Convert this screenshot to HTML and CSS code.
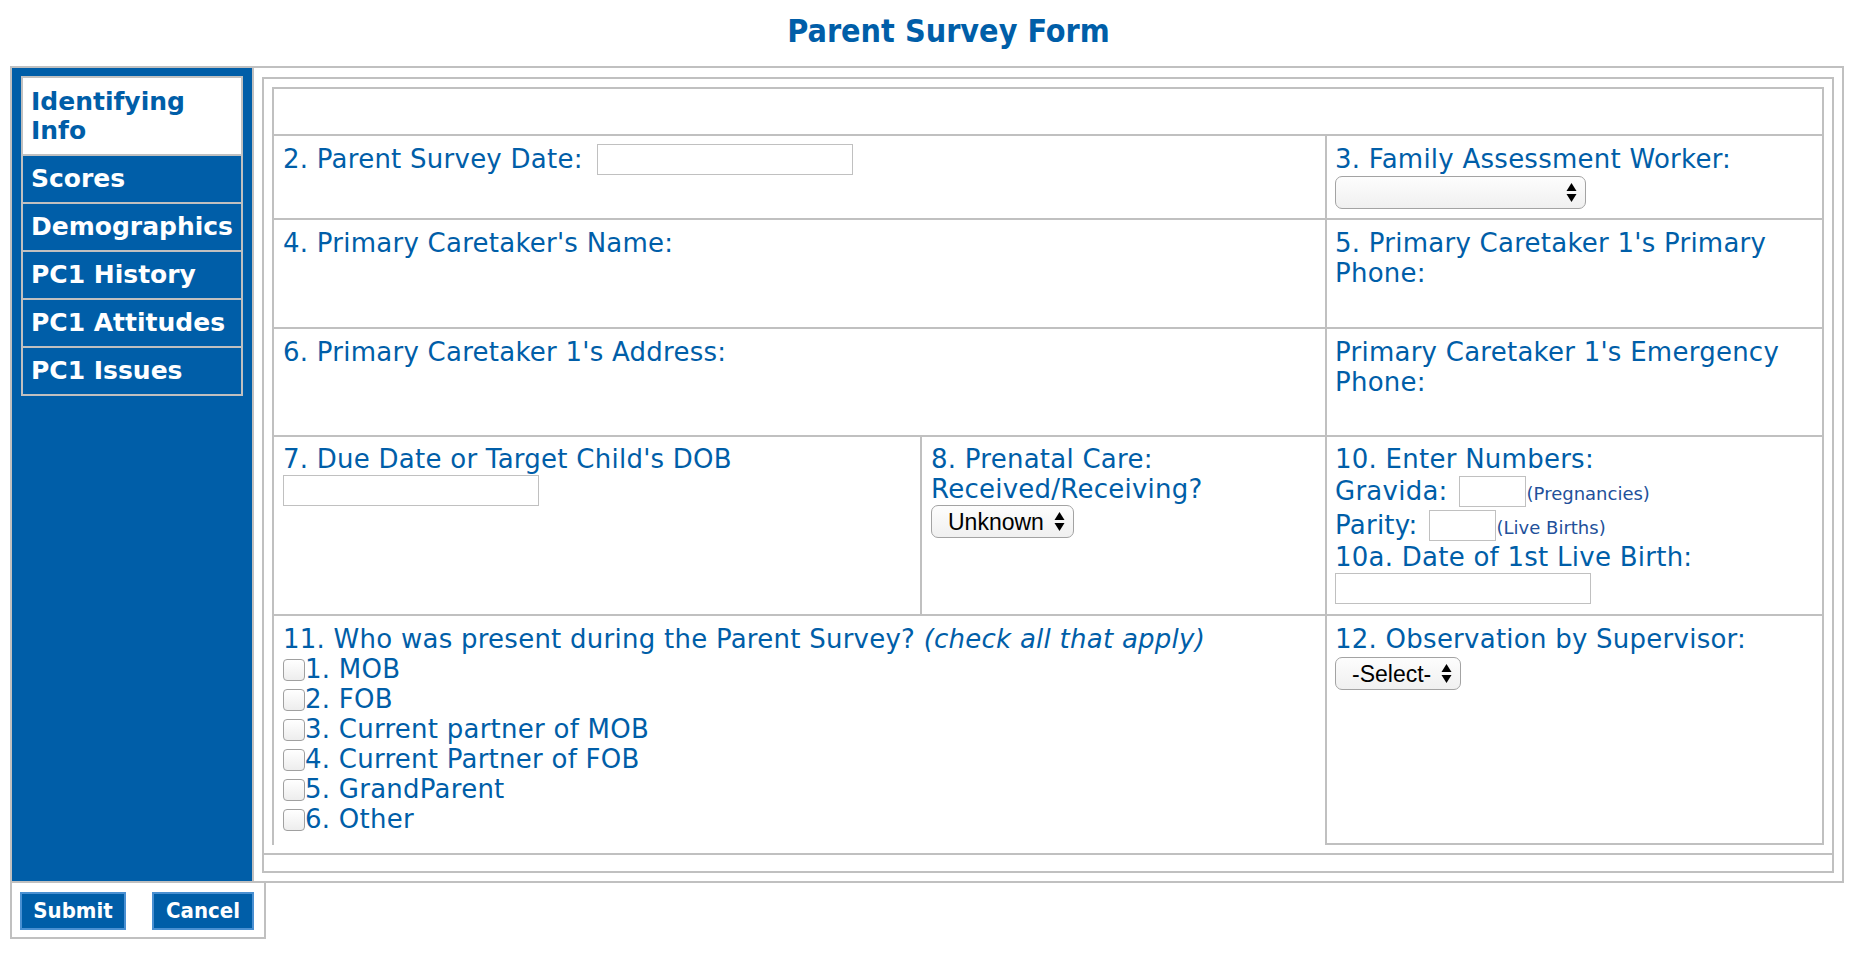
FILE: index.html
```html
<!DOCTYPE html>
<html>
<head>
<meta charset="utf-8">
<title>Parent Survey Form</title>
<link rel="stylesheet" href="styles.css">
</head>
<body>
<div class="page">
  <h1 class="title">Parent Survey Form</h1>
  <div class="frame">
    <nav class="side">
      <div class="tab active">Identifying Info</div>
      <div class="tab">Scores</div>
      <div class="tab">Demographics</div>
      <div class="tab">PC1 History</div>
      <div class="tab">PC1 Attitudes</div>
      <div class="tab">PC1 Issues</div>
    </nav>
    <main class="main">
      <div class="box">
        <div class="box-top">
          <div class="grid">
            <div class="c span3"></div>

            <div class="c span2">2. Parent Survey Date: <input class="txt date gap" type="text"></div>
            <div class="c rc">3. Family Assessment Worker:
              <span class="sel wk mt2"><svg class="arr" viewBox="0 0 11 21" width="11" height="21"><polygon points="0.5,9 5.5,1 10.5,9"/><polygon points="0.5,12 5.5,20 10.5,12"/></svg></span>
            </div>

            <div class="c span2">4. Primary Caretaker's Name:</div>
            <div class="c rc">5. Primary Caretaker 1's Primary Phone:</div>

            <div class="c span2">6. Primary Caretaker 1's Address:</div>
            <div class="c rc">Primary Caretaker 1's Emergency Phone:</div>

            <div class="c r5">7. Due Date or Target Child's DOB
              <input class="txt date blk mt1" type="text">
            </div>
            <div class="c r5">8. Prenatal Care: Received/Receiving?
              <span class="sel mt1">Unknown<svg class="arr" viewBox="0 0 11 21" width="11" height="21"><polygon points="0.5,9 5.5,1 10.5,9"/><polygon points="0.5,12 5.5,20 10.5,12"/></svg></span>
            </div>
            <div class="c rc r5">
              <div>10. Enter Numbers:</div>
              <div class="nl"><span>Gravida:</span><input class="txt num" type="text"><span class="sm">(Pregnancies)</span></div>
              <div class="nl"><span>Parity:</span><input class="txt num" type="text"><span class="sm">(Live Births)</span></div>
              <div>10a. Date of 1st Live Birth:</div>
              <input class="txt date blk mt1" type="text">
            </div>

            <div class="c span2 last">11. Who was present during the Parent Survey? <em>(check all that apply)</em>
              <label class="chk"><input type="checkbox">1. MOB</label>
              <label class="chk"><input type="checkbox">2. FOB</label>
              <label class="chk"><input type="checkbox">3. Current partner of MOB</label>
              <label class="chk"><input type="checkbox">4. Current Partner of FOB</label>
              <label class="chk"><input type="checkbox">5. GrandParent</label>
              <label class="chk"><input type="checkbox">6. Other</label>
            </div>
            <div class="c rc">12. Observation by Supervisor:
              <span class="sel mt3">-Select-<svg class="arr" viewBox="0 0 11 21" width="11" height="21"><polygon points="0.5,9 5.5,1 10.5,9"/><polygon points="0.5,12 5.5,20 10.5,12"/></svg></span>
            </div>
          </div>
        </div>
        <div class="box-bottom"></div>
      </div>
    </main>
  </div>
  <div class="actions">
    <button class="btn" type="button">Submit</button>
    <button class="btn" type="button">Cancel</button>
  </div>
</div>
</body>
</html>
```
FILE: styles.css
```css
body {
  margin: 0;
  background: #ffffff;
  font-family: "DejaVu Sans", Verdana, sans-serif;
  color: #005ea8;
}

.page {
  padding-left: 10px;
  width: 1834px;
}

.title {
  margin: 0;
  height: 66px;
  box-sizing: border-box;
  padding: 13px 0 0 43px;
  text-align: center;
  font-family: "DejaVu Sans Condensed", "DejaVu Sans", sans-serif;
  font-stretch: condensed;
  font-weight: bold;
  font-size: 32px;
  line-height: 37px;
  color: #005ea8;
}

.frame {
  display: flex;
  width: 1834px;
  height: 817px;
  box-sizing: border-box;
  border: 2px solid #c0c0c0;
}

.side {
  width: 242px;
  flex: none;
  box-sizing: border-box;
  background: #005ea8;
  border-right: 2px solid #c0c0c0;
  padding: 8px 9px;
}

.tab {
  border: 2px solid #c0c0c0;
  padding: 8px 8px 9px;
  margin-top: -2px;
  font-family: "DejaVu Sans", Verdana, sans-serif;
  font-weight: bold;
  font-size: 25px;
  line-height: 29px;
  color: #ffffff;
}

.tab.active {
  margin-top: 0;
  padding: 9px 8px;
  background: #ffffff;
  color: #005ea8;
}

.main {
  flex: 1;
  padding: 9px 8px 8px;
}

.box {
  height: 796px;
  box-sizing: border-box;
  border: 2px solid #c0c0c0;
  display: flex;
  flex-direction: column;
}

.box-top {
  padding: 8px;
}

.box-bottom {
  flex: 1;
  border-top: 2px solid #c0c0c0;
}

.grid {
  display: grid;
  grid-template-columns: 646px 403px 495px;
  grid-template-rows: 45px 82px 107px 106px 177px 227px;
  gap: 2px;
  padding: 2px;
  background: #c0c0c0;
  font-size: 26px;
  line-height: 30px;
  letter-spacing: 0.25px;
}

.c {
  background: #ffffff;
  padding: 8px 9px;
  min-width: 0;
}

.c.rc {
  padding-left: 8px;
}

.c.r5 {
  padding-top: 7px;
}

.span3 {
  grid-column: 1 / 4;
}

.span2 {
  grid-column: 1 / 3;
}

.last {
  margin-bottom: -2px;
}

.txt {
  box-sizing: border-box;
  height: 31px;
  border: 1px solid #c0c0c0;
  border-radius: 0;
  padding: 0;
  margin: 0;
  background: #ffffff;
  vertical-align: top;
  outline: none;
}

.txt.date {
  width: 256px;
}

.txt.gap {
  margin-left: 6px;
}

.txt.blk {
  display: block;
}

.txt.num {
  width: 67px;
  margin-left: 11px;
  flex: none;
}

.mt1 {
  margin-top: 1px;
}

.mt2 {
  margin-top: 2px;
}

.mt3 {
  margin-top: 3px;
}

.nl {
  display: flex;
  align-items: center;
  height: 34px;
}

.nl span {
  line-height: 30px;
}

.nl .sm {
  font-size: 18px;
  letter-spacing: 0;
  margin-left: 1px;
  margin-top: 6px;
  color: #22509a;
}

.sel {
  display: flex;
  width: max-content;
  align-items: center;
  gap: 10px;
  height: 33px;
  box-sizing: border-box;
  border: 1px solid #a3a3a3;
  border-radius: 7px;
  background: linear-gradient(#fdfdfd, #f0f0f0);
  padding: 0 8px 0 16px;
  font-family: "Liberation Sans", Arial, sans-serif;
  font-size: 23px;
  line-height: 30px;
  letter-spacing: 0;
  color: #000000;
}

.sel.wk {
  width: 251px;
  justify-content: flex-end;
}

.arr {
  display: block;
  fill: #000000;
  flex: none;
}

.chk {
  display: block;
}

.chk input {
  appearance: none;
  -webkit-appearance: none;
  width: 22px;
  height: 22px;
  margin: 0;
  box-sizing: border-box;
  border: 1px solid #a0a0a0;
  border-radius: 4px;
  background: linear-gradient(#ffffff, #ededed);
  vertical-align: -3px;
}

.actions {
  width: 256px;
  box-sizing: border-box;
  border: 2px solid #c0c0c0;
  border-top: none;
  padding: 9px 8px 7px;
  display: flex;
  gap: 26px;
}

.btn {
  width: 106px;
  height: 38px;
  box-sizing: border-box;
  border: 2px solid #4a90d2;
  border-radius: 0;
  background: #005ea8;
  color: #ffffff;
  padding: 0;
  margin: 0;
  font-family: "DejaVu Sans Condensed", "DejaVu Sans", sans-serif;
  font-stretch: condensed;
  font-weight: bold;
  font-size: 22px;
  line-height: 34px;
}

.btn + .btn {
  width: 102px;
}
```
